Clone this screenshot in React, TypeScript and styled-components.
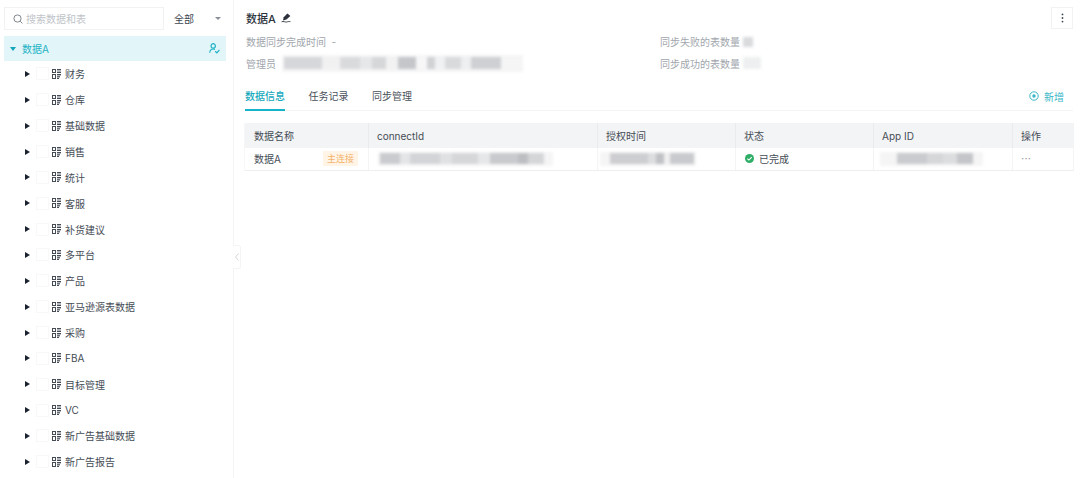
import React from "react";
import styled, { createGlobalStyle } from "styled-components";

const GlobalStyle = createGlobalStyle`
  html, body {
    margin: 0;
    padding: 0;
    background: #fff;
  }
  body {
    font-family: Inter, "Noto Sans CJK SC", "Noto Sans", sans-serif;
    font-size: 10px;
    color: #3d4650;
  }
`;

const Page = styled.div`
  display: flex;
  width: 1080px;
  height: 478px;
  overflow: hidden;
`;

const Sidebar = styled.aside`
  position: relative;
  flex: none;
  width: 234px;
  box-sizing: border-box;
  padding: 7px 7px 0 4px;
  border-right: 1px solid #f3f4f5;
`;

const SearchBar = styled.div`
  display: flex;
  align-items: center;
  height: 23px;
  margin-bottom: 6px;
`;

const SearchBox = styled.div`
  display: flex;
  align-items: center;
  gap: 3px;
  width: 160px;
  height: 23px;
  box-sizing: border-box;
  padding-left: 8px;
  border: 1px solid #f1f2f3;
  color: #c0c4c9;
`;

const ScopeSelect = styled.div`
  display: flex;
  flex: 1;
  align-items: center;
  justify-content: space-between;
  padding: 0 5px 0 10px;
  color: #3d4650;
`;

const Caret = styled.span`
  width: 0;
  height: 0;
  border-left: 3px solid transparent;
  border-right: 3px solid transparent;
  border-top: 3px solid #8a9099;
`;

const RootNode = styled.div`
  display: flex;
  align-items: center;
  height: 25px;
  padding: 0 6px 0 6px;
  background: #e2f5f8;
  color: #22b3c6;
`;

const RootCaret = styled.span`
  width: 0;
  height: 0;
  margin-right: 6px;
  border-left: 3px solid transparent;
  border-right: 3px solid transparent;
  border-top: 4px solid #12a5bb;
`;

const RootLabel = styled.span`
  flex: 1;
`;

const TreeList = styled.div`
  display: flex;
  flex-direction: column;
`;

const TreeRow = styled.div`
  display: flex;
  align-items: center;
  height: 25.87px;
  padding-left: 21px;
  color: #454c55;
`;

const ExpandArrow = styled.span`
  width: 0;
  height: 0;
  margin-right: 6px;
  border-top: 3.5px solid transparent;
  border-bottom: 3.5px solid transparent;
  border-left: 5px solid #1b2230;
`;

const Check = styled.span`
  width: 11px;
  height: 11px;
  margin-right: 3px;
  border: 1px solid #f8f8f9;
`;

const TreeLabel = styled.span`
  margin-left: 4px;
`;

const CollapseHandle = styled.div`
  position: absolute;
  top: 245px;
  right: -8px;
  display: flex;
  align-items: center;
  justify-content: center;
  width: 8px;
  height: 24px;
  box-sizing: border-box;
  border: 1px solid #f3f4f5;
  border-left: none;
  border-radius: 0 3px 3px 0;
  background: #fff;
`;

const Main = styled.main`
  flex: 1;
  min-width: 0;
  box-sizing: border-box;
  padding: 7px 7px 0 11px;
`;

const TitleRow = styled.div`
  display: flex;
  align-items: center;
  justify-content: space-between;
  height: 22px;
`;

const Title = styled.h1`
  display: flex;
  align-items: center;
  gap: 5px;
  margin: 0;
  padding-left: 1px;
  font-size: 11px;
  font-weight: 500;
  color: #2b323b;
`;

const MoreButton = styled.button`
  display: flex;
  align-items: center;
  justify-content: center;
  width: 22px;
  height: 22px;
  padding: 0;
  border: 1px solid #f1f2f3;
  background: #fff;
`;

const InfoGrid = styled.div`
  display: grid;
  grid-template-columns: 414px 1fr;
  grid-auto-rows: 21.5px;
  align-items: center;
  margin-top: 2px;
  color: #a1a6ad;
`;

const InfoItem = styled.div`
  display: flex;
  align-items: center;
  gap: 3px;
  padding-left: 1px;
`;

const Smudge = styled.div<{ $w: number; $h?: number; $shift?: number; $bg?: string }>`
  display: flex;
  flex: none;
  align-items: center;
  width: ${(p) => p.$w}px;
  height: ${(p) => p.$h ?? 16}px;
  margin-left: ${(p) => p.$shift ?? 0}px;
  background: ${(p) => p.$bg ?? "#f5f5f6"};
  filter: blur(1.4px);
`;

const SmudgeBlock = styled.span<{ $w: number; $shade: string }>`
  flex: none;
  width: ${(p) => p.$w}px;
  height: 72%;
  background: ${(p) => p.$shade};
`;

const Tabs = styled.div`
  display: flex;
  align-items: stretch;
  height: 28px;
  margin-top: 8px;
  border-bottom: 1px solid #f3f4f5;
`;

const Tab = styled.div<{ $active?: boolean }>`
  display: flex;
  align-items: center;
  margin-right: 23.5px;
  margin-bottom: -1px;
  border-bottom: 2px solid ${(p) => (p.$active ? "#16b4c8" : "transparent")};
  color: ${(p) => (p.$active ? "#16a9bd" : "#4a515a")};
  font-weight: ${(p) => (p.$active ? 500 : 400)};
`;

const AddAction = styled.div`
  display: flex;
  align-items: center;
  gap: 5px;
  margin-left: auto;
  padding-right: 9px;
  color: #38b6c7;
`;

const Table = styled.div`
  display: grid;
  grid-template-columns: 123px 229px 138px 138px 139px 61px;
  grid-template-rows: 25px 22px;
  width: 829px;
  box-sizing: border-box;
  margin-top: 12px;
  border-bottom: 1px solid #eceef0;
  border-right: 1px solid #f3f4f5;
  box-shadow: -1px 0 0 #f6f7f8;
`;

const HeadCell = styled.div`
  display: flex;
  align-items: center;
  padding-left: 8px;
  background: #f3f4f6;
  border-left: 1px solid #eaebed;
  color: #454c55;

  &:first-child {
    border-left-color: transparent;
  }
`;

const Cell = styled.div`
  display: flex;
  align-items: center;
  padding: 0 9px 1px 8px;
  border-left: 1px solid #f3f4f5;
  color: #454c55;
`;

const NameCell = styled(Cell)`
  justify-content: space-between;
  padding-right: 10px;
  border-left-color: transparent;
`;

const StatusCell = styled(Cell)`
  gap: 5px;
  padding-left: 9px;
`;

const ActionCell = styled(Cell)`
  font-family: "Noto Sans CJK SC", sans-serif;
  color: #8d9299;
`;

const LinkTag = styled.span`
  padding: 2px 4px;
  background: #fff4e6;
  color: #f5b26b;
  font-size: 9px;
  line-height: 11px;
`;

const TableIcon = () => (
  <svg width="9" height="10" viewBox="0 0 9 10" fill="#454c55">
    <path d="M0 0h4v4H0zM1 1v2h2V1zM0 5h4v5H0zM1 6v3h2V6z" fillRule="evenodd" />
    <rect x="5" y="0" width="4" height="1.4" />
    <rect x="5" y="2.6" width="4" height="1.4" />
    <rect x="5" y="5" width="4" height="1.4" />
    <rect x="5" y="7.2" width="3" height="1.2" />
    <rect x="5" y="8.9" width="2" height="1.1" />
  </svg>
);

const SearchIcon = () => (
  <svg width="10" height="10" viewBox="0 0 10 10" fill="none" stroke="#7f868e" strokeWidth="1">
    <circle cx="4.5" cy="4.5" r="3.6" />
    <path d="M7.2 7.2L9.4 9.4" />
  </svg>
);

const UserIcon = () => (
  <svg width="11" height="11" viewBox="0 0 11 11" fill="none" stroke="#22b3c6" strokeWidth="1.2">
    <circle cx="4.2" cy="2.9" r="2.2" />
    <path d="M0.7 9.8c0.2-2.3 1.6-3.8 3.5-3.8 0.7 0 1.2 0.2 1.7 0.5M6.2 8.3l1.6 1.5 2.6-2.8" />
  </svg>
);

const EditIcon = () => (
  <svg width="10" height="10" viewBox="0 0 10 10">
    <path d="M6.4 0.6l3 2.4-4 3.6-3.4 0.8 0.7-3.2z" fill="#2b323b" />
    <path d="M0.6 8.8c2-1 3.4 0.6 5 0.2 1.2-0.3 2-0.6 3.8-0.4" fill="none" stroke="#2b323b" strokeWidth="0.9" />
  </svg>
);

const DotsIcon = () => (
  <svg width="3" height="10" viewBox="0 0 3 10" fill="#3d4650">
    <circle cx="1.5" cy="1.4" r="0.9" />
    <circle cx="1.5" cy="5" r="0.9" />
    <circle cx="1.5" cy="8.6" r="0.9" />
  </svg>
);

const AddIcon = () => (
  <svg width="10" height="10" viewBox="0 0 10 10" fill="none">
    <circle cx="5" cy="5" r="4.2" stroke="#38b6c7" strokeWidth="1" />
    <circle cx="5" cy="5" r="1.7" fill="#38b6c7" />
  </svg>
);

const DoneIcon = () => (
  <svg width="9" height="9" viewBox="0 0 9 9">
    <circle cx="4.5" cy="4.5" r="4.5" fill="#2fae68" />
    <path d="M2.3 4.6l1.6 1.5 2.8-2.9" fill="none" stroke="#fff" strokeWidth="1.1" />
  </svg>
);

const folders = [
  "财务",
  "仓库",
  "基础数据",
  "销售",
  "统计",
  "客服",
  "补货建议",
  "多平台",
  "产品",
  "亚马逊源表数据",
  "采购",
  "FBA",
  "目标管理",
  "VC",
  "新广告基础数据",
  "新广告报告",
];

const managerBlocks: [number, string][] = [
  [2, "transparent"],
  [38, "#d6d7da"],
  [18, "#f1f1f2"],
  [20, "#d9dadc"],
  [12, "#e6e7e9"],
  [14, "#d6d7d9"],
  [12, "#f2f2f3"],
  [18, "#c4c6c9"],
  [11, "#f7f7f8"],
  [8, "#d0d2d4"],
  [10, "#f0f1f2"],
  [16, "#d9dadc"],
  [10, "#eeeff0"],
  [30, "#cfd0d3"],
];

const connectBlocks: [number, string][] = [
  [2, "transparent"],
  [20, "#c9cbce"],
  [10, "#e4e5e7"],
  [30, "#d3d4d7"],
  [12, "#e0e1e3"],
  [26, "#d6d7d9"],
  [12, "#e6e7e8"],
  [28, "#c9cacd"],
  [10, "#bcbec1"],
  [16, "#d5d6d8"],
];

const timeBlocks: [number, string][] = [
  [10, "transparent"],
  [38, "#cdced1"],
  [8, "#dddee0"],
  [8, "#bfc1c4"],
  [6, "#f0f0f1"],
  [24, "#c8cacd"],
];

const appBlocks: [number, string][] = [
  [17, "transparent"],
  [30, "#c9cbce"],
  [16, "#d6d7d9"],
  [14, "#dcdddf"],
  [16, "#c3c5c8"],
];

const renderBlocks = (blocks: [number, string][]) =>
  blocks.map(([w, shade], i) => <SmudgeBlock key={i} $w={w} $shade={shade} />);

export default function App() {
  return (
    <Page>
      <GlobalStyle />
      <Sidebar>
        <SearchBar>
          <SearchBox>
            <SearchIcon />
            <span>搜索数据和表</span>
          </SearchBox>
          <ScopeSelect>
            <span>全部</span>
            <Caret />
          </ScopeSelect>
        </SearchBar>
        <RootNode>
          <RootCaret />
          <RootLabel>数据A</RootLabel>
          <UserIcon />
        </RootNode>
        <TreeList>
          {folders.map((name) => (
            <TreeRow key={name}>
              <ExpandArrow />
              <Check />
              <TableIcon />
              <TreeLabel>{name}</TreeLabel>
            </TreeRow>
          ))}
        </TreeList>
        <CollapseHandle>
          <svg width="4" height="8" viewBox="0 0 4 8" fill="none" stroke="#c4c8cc" strokeWidth="0.8">
            <path d="M3.5 0.5L0.6 4l2.9 3.5" />
          </svg>
        </CollapseHandle>
      </Sidebar>
      <Main>
        <TitleRow>
          <Title>
            数据A
            <EditIcon />
          </Title>
          <MoreButton>
            <DotsIcon />
          </MoreButton>
        </TitleRow>
        <InfoGrid>
          <InfoItem>数据同步完成时间 &nbsp;-</InfoItem>
          <InfoItem>
            同步失败的表数量
            <Smudge $w={10} $h={10} $bg="#d9dbdc" />
          </InfoItem>
          <InfoItem>
            管理员
            <Smudge $w={241} $h={17} $shift={3}>{renderBlocks(managerBlocks)}</Smudge>
          </InfoItem>
          <InfoItem>
            同步成功的表数量
            <Smudge $w={18} $h={12} $bg="#eeeff0" />
          </InfoItem>
        </InfoGrid>
        <Tabs>
          <Tab $active>数据信息</Tab>
          <Tab>任务记录</Tab>
          <Tab>同步管理</Tab>
          <AddAction>
            <AddIcon />
            新增
          </AddAction>
        </Tabs>
        <Table>
          <HeadCell>数据名称</HeadCell>
          <HeadCell>connectId</HeadCell>
          <HeadCell>授权时间</HeadCell>
          <HeadCell>状态</HeadCell>
          <HeadCell>App ID</HeadCell>
          <HeadCell>操作</HeadCell>
          <NameCell>
            数据A
            <LinkTag>主连接</LinkTag>
          </NameCell>
          <Cell>
            <Smudge $w={175} $h={14} $shift={1}>{renderBlocks(connectBlocks)}</Smudge>
          </Cell>
          <Cell>
            <Smudge $w={96} $h={14} $shift={-6}>{renderBlocks(timeBlocks)}</Smudge>
          </Cell>
          <StatusCell>
            <DoneIcon />
            已完成
          </StatusCell>
          <Cell>
            <Smudge $w={103} $h={14} $shift={-2}>{renderBlocks(appBlocks)}</Smudge>
          </Cell>
          <ActionCell>…</ActionCell>
        </Table>
      </Main>
    </Page>
  );
}
